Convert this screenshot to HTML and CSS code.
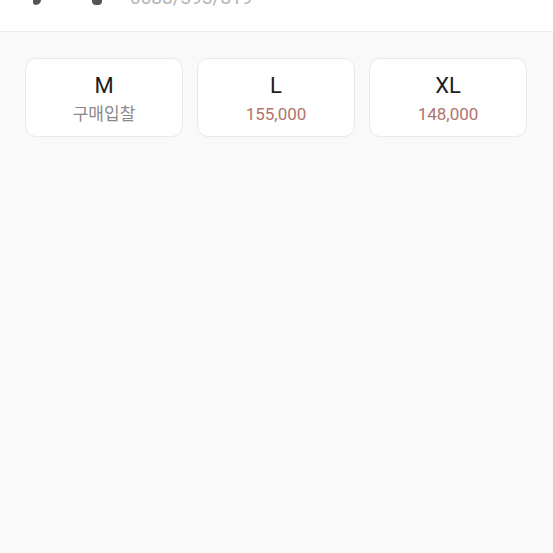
FILE: index.html
```html
<!DOCTYPE html>
<html lang="ko">
<head>
<meta charset="utf-8">
<link rel="stylesheet" href="styles.css">
</head>
<body>
<div class="header">
  <div class="header-inner">
    <div class="thumb">
      <span class="blob blob-a"></span>
      <span class="blob blob-b"></span>
    </div>
    <div class="model">0088/393/819</div>
  </div>
</div>
<div class="sizes">
  <div class="card">
    <div class="size">M</div>
    <div class="price muted">구매입찰</div>
  </div>
  <div class="card">
    <div class="size">L</div>
    <div class="price">155,000</div>
  </div>
  <div class="card">
    <div class="size">XL</div>
    <div class="price">148,000</div>
  </div>
</div>
</body>
</html>
```

FILE: styles.css
```css
html, body {
  margin: 0;
  padding: 0;
  background: #f9f9f9;
  font-family: Roboto, "Noto Sans", "Noto Sans CJK KR", sans-serif;
  height: 553px;
  overflow: hidden;
}
.header {
  height: 31px;
  background: #ffffff;
  border-bottom: 1px solid #ececec;
  overflow: hidden;
}
.header-inner {
  display: flex;
  align-items: flex-end;
  height: 40px;
  margin-top: -35px;
  padding-left: 30px;
}
.thumb {
  position: relative;
  width: 80px;
  height: 40px;
}
.blob {
  position: absolute;
  bottom: 0;
  background: #555;
  border-radius: 0 0 4px 4px;
}
.blob-a { left: 3px; width: 8px; height: 8px; border-radius: 0 0 5px 3px; }
.blob-b { left: 62px; width: 10px; height: 9px; }
.model {
  margin-left: 20px;
  font-size: 19px;
  line-height: 22px;
  color: #b4b4b4;
  margin-bottom: -4px;
}
.sizes {
  display: grid;
  grid-template-columns: repeat(3, 1fr);
  gap: 14px;
  padding: 26px 26px 0 25px;
}
.card {
  background: #ffffff;
  border: 1px solid #e9e9e9;
  border-radius: 11px;
  display: flex;
  flex-direction: column;
  align-items: center;
  padding-top: 13px;
  box-sizing: border-box;
  height: 79px;
}
.size {
  font-size: 22px;
  line-height: 28px;
  color: #1d1d1d;
}
.price {
  margin-top: 3px;
  font-size: 17px;
  line-height: 22px;
  color: #b0736c;
}
.price.muted {
  font-size: 17px;
  color: #8a8a8a;
}
```
